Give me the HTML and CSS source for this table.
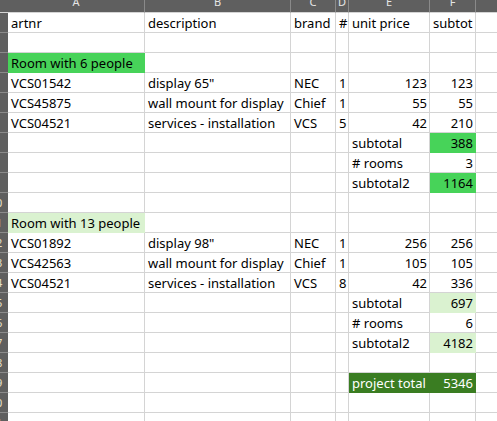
FILE: index.html
```html
<!DOCTYPE html>
<html>
<head>
<meta charset="utf-8">
<link rel="stylesheet" href="styles.css">
</head>
<body>
<div class="sheet">
  <div class="corner"></div>
  <div class="ch">A</div><div class="ch">B</div><div class="ch">C</div><div class="ch">D</div><div class="ch">E</div><div class="ch">F</div><div class="ch last"></div>

  <div class="rh"><span>1</span></div>
  <div class="c">artnr</div><div class="c">description</div><div class="c">brand</div><div class="c">#</div><div class="c">unit price</div><div class="c">subtot</div><div class="c last"></div>

  <div class="rh"><span>2</span></div>
  <div class="c"></div><div class="c"></div><div class="c"></div><div class="c"></div><div class="c"></div><div class="c"></div><div class="c last"></div>

  <div class="rh"><span>3</span></div>
  <div class="c g1">Room with 6 people</div><div class="c"></div><div class="c"></div><div class="c"></div><div class="c"></div><div class="c"></div><div class="c last"></div>

  <div class="rh"><span>4</span></div>
  <div class="c">VCS01542</div><div class="c">display 65"</div><div class="c">NEC</div><div class="c r">1</div><div class="c r">123</div><div class="c r">123</div><div class="c last"></div>

  <div class="rh"><span>5</span></div>
  <div class="c">VCS45875</div><div class="c">wall mount for display</div><div class="c">Chief</div><div class="c r">1</div><div class="c r">55</div><div class="c r">55</div><div class="c last"></div>

  <div class="rh"><span>6</span></div>
  <div class="c">VCS04521</div><div class="c">services - installation</div><div class="c">VCS</div><div class="c r">5</div><div class="c r">42</div><div class="c r">210</div><div class="c last"></div>

  <div class="rh"><span>7</span></div>
  <div class="c"></div><div class="c"></div><div class="c"></div><div class="c"></div><div class="c">subtotal</div><div class="c r g1">388</div><div class="c last"></div>

  <div class="rh"><span>8</span></div>
  <div class="c"></div><div class="c"></div><div class="c"></div><div class="c"></div><div class="c"># rooms</div><div class="c r">3</div><div class="c last"></div>

  <div class="rh"><span>9</span></div>
  <div class="c"></div><div class="c"></div><div class="c"></div><div class="c"></div><div class="c">subtotal2</div><div class="c r g1">1164</div><div class="c last"></div>

  <div class="rh"><span>10</span></div>
  <div class="c"></div><div class="c"></div><div class="c"></div><div class="c"></div><div class="c"></div><div class="c"></div><div class="c last"></div>

  <div class="rh"><span>11</span></div>
  <div class="c g2">Room with 13 people</div><div class="c"></div><div class="c"></div><div class="c"></div><div class="c"></div><div class="c"></div><div class="c last"></div>

  <div class="rh"><span>12</span></div>
  <div class="c">VCS01892</div><div class="c">display 98"</div><div class="c">NEC</div><div class="c r">1</div><div class="c r">256</div><div class="c r">256</div><div class="c last"></div>

  <div class="rh"><span>13</span></div>
  <div class="c">VCS42563</div><div class="c">wall mount for display</div><div class="c">Chief</div><div class="c r">1</div><div class="c r">105</div><div class="c r">105</div><div class="c last"></div>

  <div class="rh"><span>14</span></div>
  <div class="c">VCS04521</div><div class="c">services - installation</div><div class="c">VCS</div><div class="c r">8</div><div class="c r">42</div><div class="c r">336</div><div class="c last"></div>

  <div class="rh"><span>15</span></div>
  <div class="c"></div><div class="c"></div><div class="c"></div><div class="c"></div><div class="c">subtotal</div><div class="c r g2">697</div><div class="c last"></div>

  <div class="rh"><span>16</span></div>
  <div class="c"></div><div class="c"></div><div class="c"></div><div class="c"></div><div class="c"># rooms</div><div class="c r">6</div><div class="c last"></div>

  <div class="rh"><span>17</span></div>
  <div class="c"></div><div class="c"></div><div class="c"></div><div class="c"></div><div class="c">subtotal2</div><div class="c r g2">4182</div><div class="c last"></div>

  <div class="rh"><span>18</span></div>
  <div class="c"></div><div class="c"></div><div class="c"></div><div class="c"></div><div class="c"></div><div class="c"></div><div class="c last"></div>

  <div class="rh"><span>19</span></div>
  <div class="c"></div><div class="c"></div><div class="c"></div><div class="c"></div><div class="c g3">project total</div><div class="c r g3">5346</div><div class="c last"></div>

  <div class="rh"><span>20</span></div>
  <div class="c"></div><div class="c"></div><div class="c"></div><div class="c"></div><div class="c"></div><div class="c"></div><div class="c last"></div>

  <div class="rh"><span>21</span></div>
  <div class="c"></div><div class="c"></div><div class="c"></div><div class="c"></div><div class="c"></div><div class="c"></div><div class="c last"></div>
</div>
</body>
</html>
```
FILE: styles.css
```css
html, body {
  margin: 0;
  padding: 0;
  background: #ffffff;
  overflow: hidden;
}

.sheet {
  display: grid;
  grid-template-columns: 8px 137px 146px 45px 13px 81px 46px 21px;
  grid-template-rows: 13px;
  grid-auto-rows: 20px;
  width: 497px;
  height: 421px;
  overflow: hidden;
  font-family: "Noto Sans", "DejaVu Sans", sans-serif;
  font-size: 13px;
  color: #000000;
}

.corner {
  background: #5f5f5f;
  border-bottom: 1px solid #d4d4d4;
}

.ch {
  background: #5f5f5f;
  color: #e6e6e6;
  font-size: 11px;
  line-height: 4px;
  text-align: center;
  overflow: hidden;
  border-right: 1px solid #8a8a8a;
  border-bottom: 1px solid #d4d4d4;
  box-sizing: border-box;
  height: 13px;
}

.rh {
  background: #5f5f5f;
  border-bottom: 1px solid #8a8a8a;
  box-sizing: border-box;
  overflow: hidden;
  display: flex;
  align-items: center;
}

.rh span {
  flex: 0 0 24px;
  margin-left: -16px;
  text-align: center;
  color: #e8e0c8;
  font-size: 11px;
  line-height: 18px;
}

.c {
  box-sizing: border-box;
  border-right: 1px solid #d4d4d4;
  border-bottom: 1px solid #d4d4d4;
  padding: 0 2px 0 3px;
  line-height: 20px;
  white-space: nowrap;
  overflow: hidden;
}

.ch.last,
.c.last {
  border-right: none;
}

.r {
  text-align: right;
}

.g1 {
  background: #47d359;
  border-color: #47d359;
}

.g2 {
  background: #daf2d0;
  border-color: #daf2d0;
}

.g3 {
  background: #3a7d22;
  border-color: #3a7d22;
  color: #ffffff;
}
```
